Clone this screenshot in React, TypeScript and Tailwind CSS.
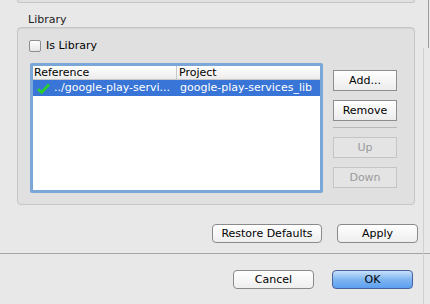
import React from 'react';

const font = "font-['DejaVu_Sans',sans-serif]";

const SquareButton: React.FC<{ label: string; disabled?: boolean }> = ({ label, disabled }) => (
    <button
        className={`h-[21px] w-[64px] border text-[11px] leading-none ${
            disabled
                ? 'border-[#c4c4c4] bg-[#e4e4e4] text-[#9a9a9a]'
                : 'border-[#8e8e8e] bg-gradient-to-b from-white to-[#ececec] text-black'
        }`}
    >
        {label}
    </button>
);

const RoundButton: React.FC<{ label: string; width: string; primary?: boolean }> = ({
    label,
    width,
    primary,
}) => (
    <button
        className={`h-[19px] ${width} rounded-[4px] border text-[11px] leading-none ${
            primary
                ? 'border-[#4a62a0] bg-gradient-to-b from-[#c8e0fa] via-[#7fb5f0] to-[#5c9ff0] text-black'
                : 'border-[#8a8a8a] bg-gradient-to-b from-white to-[#eeeeee] text-black'
        }`}
    >
        {label}
    </button>
);

const Check: React.FC = () => (
    <svg width="13" height="11" viewBox="0 0 13 11" className="shrink-0">
        <path d="M1 6 L4.5 9.5 L12 1.5" fill="none" stroke="#2bd12b" strokeWidth="2.6" strokeLinejoin="round" />
    </svg>
);

export default function App() {
    return (
        <div className={`relative flex h-[304px] w-[430px] flex-col overflow-hidden bg-[#e8e8e8] ${font} text-black`}>
            {/* window edge */}
            <div className="absolute right-[1px] top-0 h-[48px] w-px bg-[#9c9c9c]" />
            <div className="absolute right-[6px] top-[48px] h-[256px] w-px bg-[#d0d0d0]" />

            {/* end of previous group */}
            <div className="ml-[17px] h-[3px] w-[398px] rounded-b-[4px] border-x border-b border-[#c6c6c6] bg-[#e0e0e0]" />

            <div className="ml-[28px] mt-[10px] h-[13px] text-[11px] leading-[13px] text-[#222]">Library</div>

            <div className="ml-[17px] mt-[1px] flex h-[178px] w-[398px] flex-col rounded-[4px] border border-[#c6c6c6] bg-[#e0e0e0] shadow-[inset_0_1px_1px_rgba(0,0,0,0.06)]">
                <label className="ml-[11px] mt-[12px] flex h-[12px] items-center gap-[5px] text-[11px] leading-[12px]">
                    <span className="h-[12px] w-[12px] rounded-[2px] border border-[#8e8e8e] bg-gradient-to-b from-white to-[#e6e6e6]" />
                    Is Library
                </label>

                <div className="ml-[12px] mt-[11px] flex gap-[10px]">
                    <div className="h-[130px] w-[293px] rounded-[2px] border-[3px] border-[#7ba6d8] bg-white">
                        <div className="flex h-[14px] border-b border-[#c8c8c8] bg-gradient-to-b from-white to-[#ececec] text-[11px] leading-[14px]">
                            <div className="w-[144px] border-r border-[#c8c8c8] pl-[1px]">Reference</div>
                            <div className="pl-[2px]">Project</div>
                        </div>
                        <div className="flex h-[16px] items-center bg-[#3875d7] text-[11px] text-white">
                            <div className="flex w-[145px] items-center gap-[4px] pl-[4px]">
                                <Check />
                                <span>../google-play-servi...</span>
                            </div>
                            <div className="pl-[2px]">google-play-services_lib</div>
                        </div>
                    </div>

                    <div className="mt-[7px] flex flex-col">
                        <SquareButton label="Add..." />
                        <div className="mt-[6px]">
                            <SquareButton label="Remove" />
                        </div>
                        <div className="mt-[6px] h-px w-[64px] bg-[#b8b8b8]" />
                        <div className="mt-[6px]">
                            <SquareButton label="Up" disabled />
                        </div>
                        <div className="mt-[6px]">
                            <SquareButton label="Down" disabled />
                        </div>
                    </div>
                </div>
            </div>

            <div className="mt-[19px] flex justify-end gap-[15px] pr-[12px]">
                <RoundButton label="Restore Defaults" width="w-[110px]" />
                <RoundButton label="Apply" width="w-[81px]" />
            </div>

            <div className="mt-[10px] h-px w-full bg-[#a4a4a4]" />

            <div className="mt-[16px] flex justify-end gap-[18px] pr-[17px]">
                <RoundButton label="Cancel" width="w-[81px]" />
                <RoundButton label="OK" width="w-[81px]" primary />
            </div>
        </div>
    );
}
